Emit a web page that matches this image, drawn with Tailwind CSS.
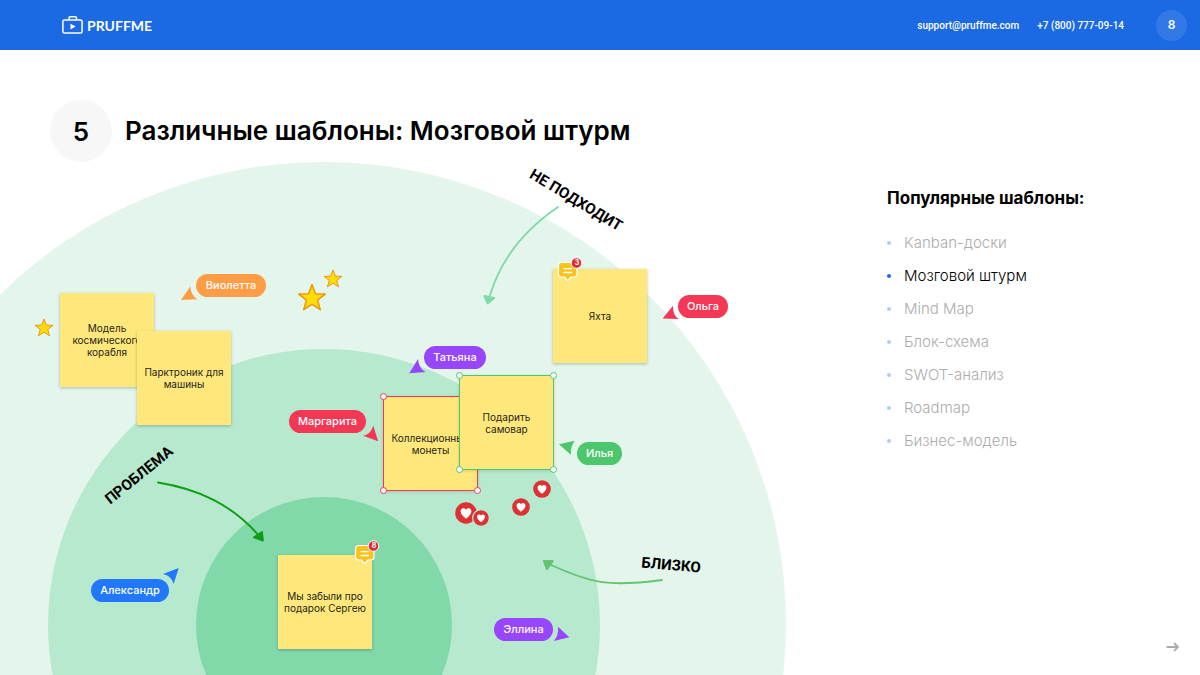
<!DOCTYPE html>
<html lang="ru">
<head>
<meta charset="utf-8">
<meta name="viewport" content="width=device-width, initial-scale=1">
<title>Pruffme — Различные шаблоны</title>
<script src="https://cdn.jsdelivr.net/npm/@tailwindcss/browser@4"></script>
</head>
<body class="flex min-h-screen flex-col bg-white font-['Inter','Roboto',sans-serif] text-black">

<svg class="hidden" aria-hidden="true">
  <symbol id="comment" viewBox="0 0 28 28">
    <path d="M5 6.500h13a3 3 0 0 1 3 3v8.500a3 3 0 0 1-3 3h-3l-3.300 3.600L8.300 21H5.500a3 3 0 0 1-3-3v-8.500a3 3 0 0 1 3-3Z" fill="#fbc31f" stroke="#fff" stroke-width="1.200" stroke-linejoin="round"/>
    <path d="M8 12.700h7.500M8 16.500h7.500" stroke="#fff" stroke-width="1.300" stroke-linecap="round"/>
    <circle cx="20.500" cy="7" r="5.300" fill="#dc2f35" stroke="#fff"/>
  </symbol>
  <symbol id="heart" viewBox="-10 -10 20 20">
    <circle r="9.800" fill="#dd3134"/>
    <path d="M0 5.200C-2.500 3.400-4.900 1-4.900-1.500c0-3 3.500-4 4.900-1.500 1.400-2.500 4.900-1.500 4.900 1.500C4.900 1 2.500 3.400 0 5.200Z" fill="#fff"/>
  </symbol>
  <symbol id="star" viewBox="-15 -15 30 30">
    <path d="M0-13.500 3.500-4.300 13.300-3.900 5.600 2.200 8.300 11.700 0 6.300-8.300 11.700-5.600 2.200-13.300-3.900-3.500-4.300Z" fill="#ffdc0a" stroke="#ee960f" stroke-width="1.500" stroke-linejoin="round"/>
  </symbol>
</svg>

<header class="flex h-[50px] items-center bg-[#1b69e3] pr-[13px] pl-[62px] text-white">
  <a href="#" class="flex items-center gap-1 font-['Lato',sans-serif] text-sm leading-5 font-bold">
    <svg class="h-5 w-[21px]" viewBox="0 0 21 20" fill="none" stroke="#fff" stroke-width="1.500" stroke-linejoin="round">
      <rect x=".9" y="5" width="19.200" height="13" rx="1.600"/>
      <path d="M7 5V3q0-1.300 1.300-1.300h4.900q1.300 0 1.300 1.300v2"/>
      <path d="M8.500 8.700v5.800l5.200-2.900Z" fill="#fff" stroke="none"/>
    </svg>
    <span class="pt-[2px]">PRUFFME</span>
  </a>
  <nav class="ml-auto flex items-center font-['Roboto',sans-serif] text-[10px] font-medium">
    <a href="mailto:support@pruffme.com">support@pruffme.com</a>
    <a href="tel:+78007770914" class="ml-[18px]">+7 (800) 777-09-14</a>
  </nav>
  <span class="ml-8 flex size-[31px] items-center justify-center rounded-full bg-white/10 text-xs font-semibold">8</span>
</header>

<main class="relative flex grow overflow-hidden">
  <section class="relative grow">
    <svg class="absolute top-0 left-0 h-[625px] w-[800px] overflow-visible" viewBox="0 50 800 625" aria-hidden="true">
      <circle cx="324" cy="624" r="462" fill="#e4f6ec"/>
      <circle cx="324" cy="625" r="276" fill="#b7e9cf"/>
      <circle cx="324" cy="625" r="128" fill="#81d8a9"/>
      <g fill="none" stroke-width="1.900" stroke-linecap="round" stroke-linejoin="round">
        <g stroke="#80d9a8"><path d="M558 207C530 226 502 254 489.500 297"/><path fill="#80d9a8" d="M484.300 296 494.200 298 487.700 303.500Z"/></g>
        <g stroke="#0f9d13"><path d="M158 482.500C198 489 232 504 260 537"/><path fill="#0f9d13" d="M254 537.300 262 532 262.900 540.500Z"/></g>
        <g stroke="#65c470"><path d="M662 580C610 587 592 584 549 564"/><path fill="#65c470" d="M543.800 561 552.700 561 547 569.300Z"/></g>
      </g>
      <path fill="#ff9c46" d="M181 300 190.300 286.500Q191 295.500 197.500 299.300Z"/>
      <path fill="#f53756" d="M662.700 318.500 673 305.700Q672.500 315 678.700 319Z"/>
      <path fill="#9746fb" d="M409.300 373.300 418 359Q418.700 368.500 425.700 372Z"/>
      <path fill="#f53756" d="M378.200 441.300 373.300 425.700Q370.500 434.500 363 435.700Z"/>
      <path fill="#4cc76e" d="M559 444.300 574.700 440.700Q570 447.500 571 455Z"/>
      <path fill="#2278fa" d="M178.700 568 163 574Q171.500 576 173.700 583.700Z"/>
      <path fill="#9746fb" d="M569.300 637.300 558 626.700Q559 635.500 553.700 641Z"/>
    </svg>

    <div class="relative flex items-center gap-[13px] pt-[50px] pl-[50px]">
      <span class="flex size-[62px] items-center justify-center rounded-full bg-[#f7f7f7] text-[26px] font-semibold">5</span>
      <h1 class="text-[26px] leading-8 font-semibold whitespace-nowrap">Различные шаблоны: Мозговой штурм</h1>
    </div>

    <div class="absolute top-0 left-0 text-[10px] leading-3 text-[#26251a]">
      <!-- Zone captions -->
      <span class="absolute top-[150px] left-[576px] -translate-1/2 rotate-[31deg] font-['Roboto',sans-serif] text-[15px] font-bold whitespace-nowrap text-black">НЕ ПОДХОДИТ</span>
      <span class="absolute top-[425px] left-[139px] -translate-1/2 rotate-[-39deg] font-['Roboto',sans-serif] text-[15px] font-bold whitespace-nowrap text-black">ПРОБЛЕМА</span>
      <span class="absolute top-[515px] left-[671px] -translate-1/2 rotate-[5deg] font-['Roboto',sans-serif] text-[15px] font-bold whitespace-nowrap text-black">БЛИЗКО</span>

      <!-- Notes -->
      <div class="absolute top-[243px] left-[60px] flex size-[94px] items-center justify-center bg-[#ffe87b] text-center shadow-[0_1px_3px_rgba(0,0,0,0.25)]">Модель космического корабля</div>
      <div class="absolute top-[281px] left-[137px] flex size-[94px] items-center justify-center bg-[#ffe87b] px-1 text-center shadow-[0_1px_3px_rgba(0,0,0,0.25)]">Парктроник для машины</div>
      <div class="absolute top-[219px] left-[553px] flex size-[94px] items-center justify-center bg-[#ffe87b] text-center shadow-[0_1px_3px_rgba(0,0,0,0.25)]">Яхта</div>
      <div class="absolute top-[505px] left-[278px] flex size-[94px] items-center justify-center bg-[#ffe87b] px-1 text-center shadow-[0_1px_3px_rgba(0,0,0,0.25)]">Мы забыли про подарок Сергею</div>
      <div class="absolute top-[346px] left-[383px] flex size-[95px] items-center justify-center border border-[#f53756] bg-[#ffe87b] text-center shadow-[0_1px_3px_rgba(0,0,0,0.15)]">
        Коллекционные монеты
        <i class="absolute -top-1 -left-1 size-[7px] rounded-full border border-[#f53756] bg-white"></i>
        <i class="absolute -bottom-1 -left-1 size-[7px] rounded-full border border-[#f53756] bg-white"></i>
        <i class="absolute -right-1 -bottom-1 size-[7px] rounded-full border border-[#f53756] bg-white"></i>
      </div>
      <div class="absolute top-[325px] left-[459px] flex size-[95px] items-center justify-center border border-[#4cc76e] bg-[#ffe87b] px-4 text-center shadow-[0_1px_3px_rgba(0,0,0,0.15)]">
        Подарить самовар
        <i class="absolute -top-1 -left-1 size-[7px] rounded-full border border-[#4cc76e] bg-white"></i>
        <i class="absolute -top-1 -right-1 size-[7px] rounded-full border border-[#4cc76e] bg-white"></i>
        <i class="absolute -bottom-1 -left-1 size-[7px] rounded-full border border-[#4cc76e] bg-white"></i>
        <i class="absolute -right-1 -bottom-1 size-[7px] rounded-full border border-[#4cc76e] bg-white"></i>
      </div>

      <!-- Comment counters -->
      <div class="absolute top-[206px] left-[556px] size-7">
        <svg class="size-7"><use href="#comment"/></svg>
        <span class="absolute top-px left-[15px] w-3 text-center text-[7px] font-bold text-white">3</span>
      </div>
      <div class="absolute top-[489px] left-[353px] size-7">
        <svg class="size-7"><use href="#comment"/></svg>
        <span class="absolute top-px left-[15px] w-3 text-center text-[7px] font-bold text-white">8</span>
      </div>

      <!-- Reactions -->
      <svg class="absolute top-[268px] left-[34px] size-5"><use href="#star"/></svg>
      <svg class="absolute top-[233px] left-[297px] size-[30px]"><use href="#star"/></svg>
      <svg class="absolute top-[219px] left-[323px] size-5"><use href="#star"/></svg>
      <svg class="absolute top-[452px] left-[455px] size-[22px]"><use href="#heart"/></svg>
      <svg class="absolute top-[459px] left-[472px] size-[18px] rounded-full bg-[#b7e9cf] p-px"><use href="#heart"/></svg>
      <svg class="absolute top-[448px] left-[512px] size-[18px]"><use href="#heart"/></svg>
      <svg class="absolute top-[430px] left-[533px] size-[18px]"><use href="#heart"/></svg>

      <!-- Participants -->
      <div class="text-[11px] leading-[23px] font-medium text-white">
        <span class="absolute top-[224px] left-[196px] w-[70px] rounded-full bg-[#ff9c46] text-center">Виолетта</span>
        <span class="absolute top-[245px] left-[678px] w-[50px] rounded-full bg-[#f53756] text-center">Ольга</span>
        <span class="absolute top-[296px] left-[424px] w-[62px] rounded-full bg-[#9746fb] text-center">Татьяна</span>
        <span class="absolute top-[360px] left-[289px] w-[77px] rounded-full bg-[#f53756] text-center">Маргарита</span>
        <span class="absolute top-[392px] left-[577px] w-[45px] rounded-full bg-[#4cc76e] text-center">Илья</span>
        <span class="absolute top-[529px] left-[91px] w-[78px] rounded-full bg-[#2278fa] text-center">Александр</span>
        <span class="absolute top-[568px] left-[494px] w-[59px] rounded-full bg-[#9746fb] text-center">Эллина</span>
      </div>
    </div>
  </section>

  <aside class="relative flex w-[313px] shrink-0 flex-col pt-[136px]">
    <h2 class="text-[17px] leading-6 font-bold">Популярные шаблоны:</h2>
    <ul class="mt-4 text-[15px] leading-[33px] font-light text-[#acacac]">
      <li class="flex items-center gap-[13px]"><i class="size-1 rounded-full bg-[#aecdf9]"></i>Kanban-доски</li>
      <li class="flex items-center gap-[13px] text-black"><i class="size-1 rounded-full bg-[#1b69e3]"></i>Мозговой штурм</li>
      <li class="flex items-center gap-[13px]"><i class="size-1 rounded-full bg-[#aecdf9]"></i>Mind Map</li>
      <li class="flex items-center gap-[13px]"><i class="size-1 rounded-full bg-[#aecdf9]"></i>Блок-схема</li>
      <li class="flex items-center gap-[13px]"><i class="size-1 rounded-full bg-[#aecdf9]"></i>SWOT-анализ</li>
      <li class="flex items-center gap-[13px]"><i class="size-1 rounded-full bg-[#aecdf9]"></i>Roadmap</li>
      <li class="flex items-center gap-[13px]"><i class="size-1 rounded-full bg-[#aecdf9]"></i>Бизнес-модель</li>
    </ul>
    <a href="#next" aria-label="Далее" class="mt-auto mr-5 mb-5 self-end">
      <svg class="h-4 w-[14px]" viewBox="0 0 14 16" fill="none" stroke="#acacac" stroke-width="1.800"><path d="M.5 8h11.500M8 4l4 4-4 4"/></svg>
    </a>
  </aside>
</main>
</body>
</html>
